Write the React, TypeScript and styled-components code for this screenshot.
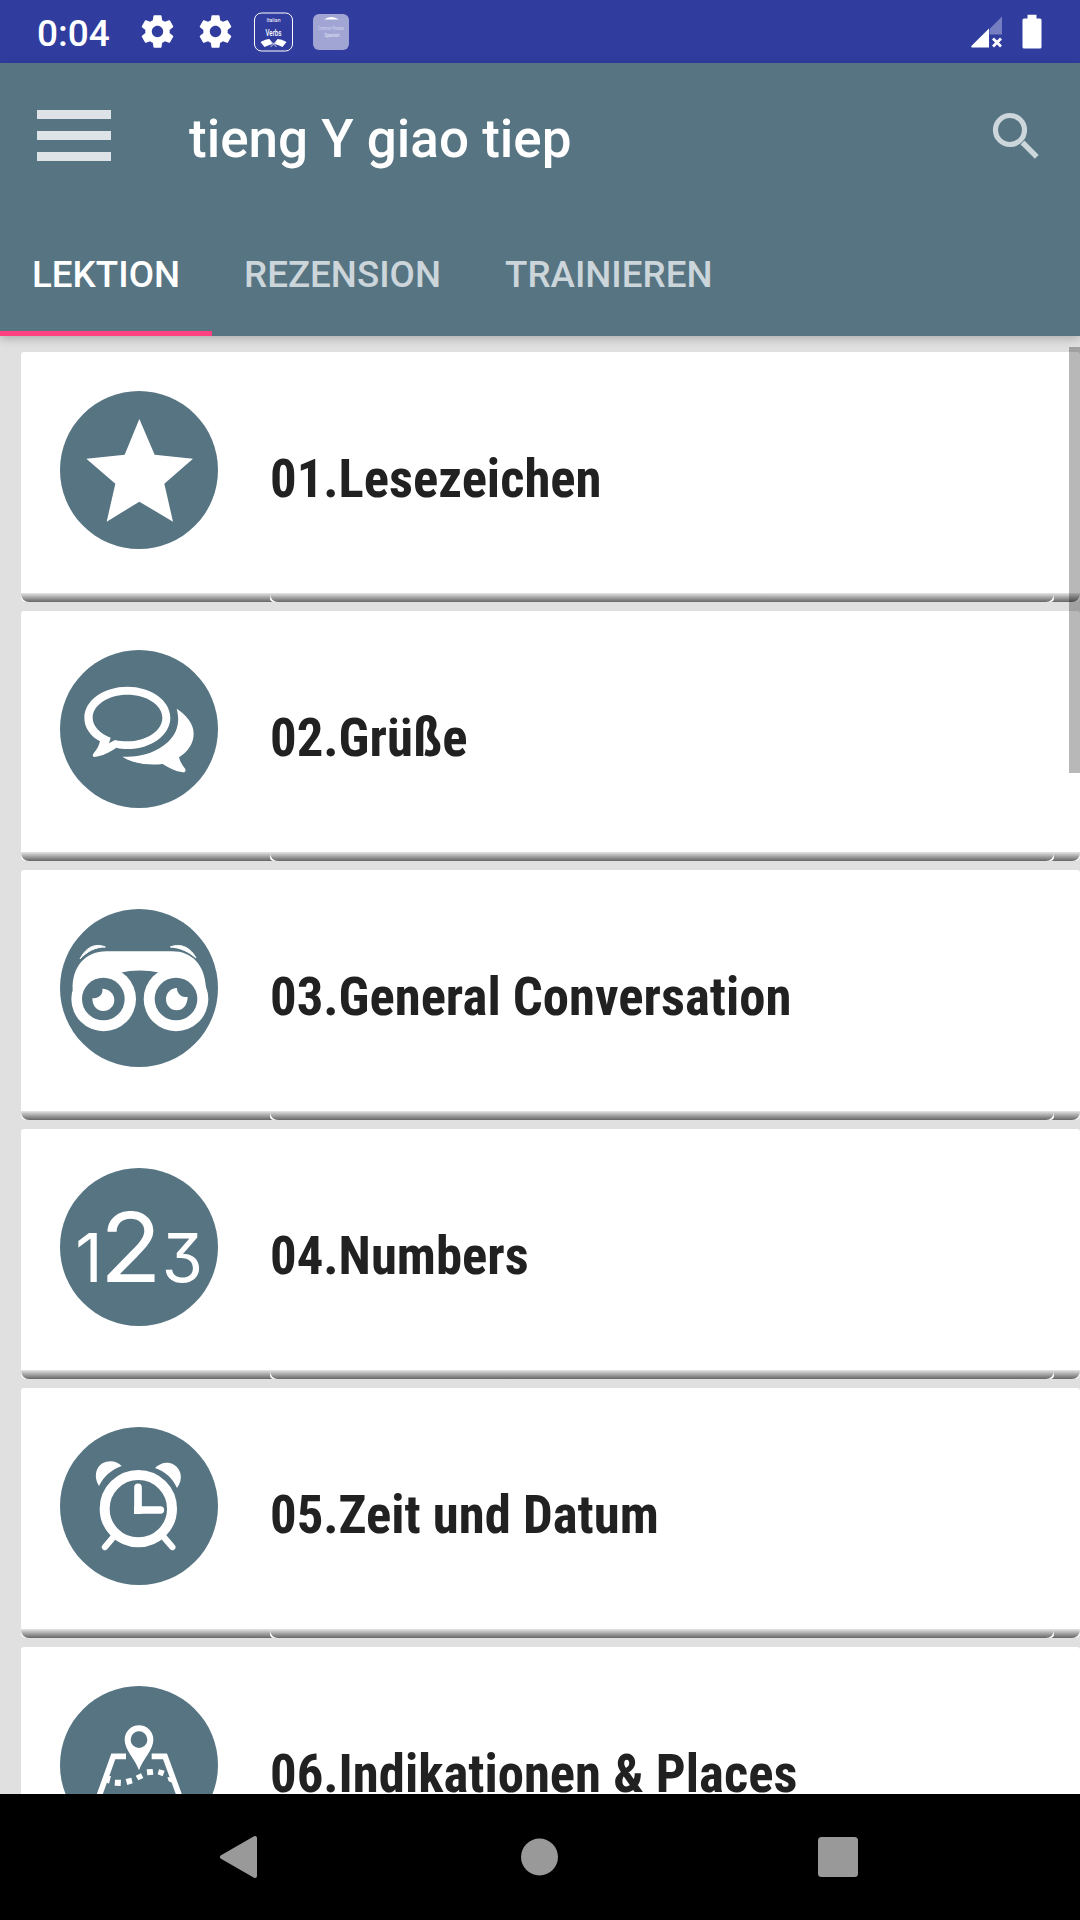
import React from "react";
import styled, { createGlobalStyle } from "styled-components";

const SLATE = "#567482";

const GlobalStyle = createGlobalStyle`
  html, body { margin: 0; padding: 0; background: #000; }
  *, *::before, *::after { box-sizing: border-box; }
  svg { display: block; flex: none; }
`;

const Screen = styled.div`
  display: flex;
  flex-direction: column;
  width: 1080px;
  height: 1920px;
  overflow: hidden;
  background: #e0e0e0;
  font-family: Roboto, "Liberation Sans", sans-serif;
`;

const StatusBar = styled.header`
  display: flex;
  align-items: center;
  flex: none;
  height: 63px;
  padding: 0 38px 0 37px;
  background: #303d9f;
  color: #fff;
`;

const Clock = styled.span`
  width: 100.5px;
  font-size: 37px;
  line-height: 63px;
  padding-top: 3px;
  font-weight: 500;
`;

const StatusIcons = styled.div`
  display: flex;
  align-items: center;
  gap: 19px;
`;

const NotificationIcon = styled.svg`
  overflow: visible;
`;

const SystemIcons = styled.div`
  display: flex;
  margin-left: auto;
  gap: 19px;
`;

const AppHeader = styled.div`
  position: relative;
  z-index: 1;
  flex: none;
  height: 273px;
  background: ${SLATE};
  box-shadow: 0 3px 9px rgba(0, 0, 0, 0.22);
`;

const Toolbar = styled.div`
  display: flex;
  align-items: center;
  height: 147px;
  padding: 0 32px 0 37px;
`;

const MenuButton = styled.div`
  display: flex;
  flex-direction: column;
  gap: 12px;
  width: 74px;
  margin: 0 78px 2px 0;
`;

const MenuLine = styled.span`
  height: 9px;
  background: #dde3e6;
`;

const Title = styled.h1`
  flex: 1;
  margin: 0;
  padding-top: 4px;
  color: #fff;
  font-size: 53px;
  font-weight: 500;
  line-height: 64px;
`;

const Tabs = styled.nav`
  display: flex;
  height: 126px;
`;

const Tab = styled.div<{ $active?: boolean }>`
  height: 126px;
  padding: 0 32px;
  color: ${(p) => (p.$active ? "#fff" : "#ccd5da")};
  border-bottom: 5px solid ${(p) => (p.$active ? "#ff4081" : "transparent")};
  font-size: 36.75px;
  font-weight: 500;
  line-height: 130px;
  white-space: nowrap;
`;

const ListArea = styled.main`
  position: relative;
  flex: 1;
  min-height: 0;
  overflow: hidden;
  padding: 16px 0 0 21px;
`;

const ScrollThumb = styled.div`
  position: absolute;
  top: 11px;
  right: 0;
  width: 11px;
  height: 426px;
  background: rgba(0, 0, 0, 0.28);
`;

const Card = styled.article`
  display: flex;
  flex-direction: column;
  height: 250px;
  margin-bottom: 9px;
  background: #fff;
  border-radius: 3px 3px 5px 5px;
`;

const CardBody = styled.div`
  display: flex;
  flex: 1;
  padding: 39px 0 0 39px;
`;

const Badge = styled.svg`
  width: 158px;
  height: 158px;
  border-radius: 50%;
  background: ${SLATE};
`;

const Label = styled.span`
  display: block;
  height: 64px;
  margin: 56px 0 0 52px;
  color: #212121;
  font-size: 52.72px;
  font-weight: 700;
  font-stretch: 75%;
  line-height: 64px;
  white-space: nowrap;
`;

const Edge = styled.div`
  flex: none;
  height: 9px;
  background: linear-gradient(#e6e6e6, #aaa 45%, #666);
  border-radius: 0 0 8px 8px;
`;

const EdgeInset = styled.div`
  height: 9px;
  margin: 0 26px 0 249px;
  background: #fff;
  border-radius: 0 0 4px 4px;
`;

const NavBar = styled.footer`
  display: flex;
  align-items: center;
  flex: none;
  height: 126px;
  padding: 0 222px 0 219px;
  justify-content: space-between;
  background: #000;
`;

const GEAR =
  "M19.43 12.98c.04-.32.07-.64.07-.98s-.03-.66-.07-.98l2.11-1.65c.19-.15.24-.42.12-.64l-2-3.46c-.12-.22-.39-.3-.61-.22l-2.49 1c-.52-.4-1.08-.73-1.69-.98l-.38-2.65C14.46 2.18 14.25 2 14 2h-4c-.25 0-.46.18-.49.42l-.38 2.65c-.61.25-1.17.59-1.69.98l-2.49-1c-.23-.09-.49 0-.61.22l-2 3.46c-.13.22-.07.49.12.64l2.11 1.65c-.04.32-.07.65-.07.98s.03.66.07.98l-2.11 1.65c-.19.15-.24.42-.12.64l2 3.46c.12.22.39.3.61.22l2.49-1c.52.4 1.08.73 1.69.98l.38 2.65c.03.24.24.42.49.42h4c.25 0 .46-.18.49-.42l.38-2.65c.61-.25 1.17-.59 1.69-.98l2.49 1c.23.09.49 0 .61-.22l2-3.46c.12-.22.07-.49-.12-.64l-2.11-1.65zM12 15.5c-1.93 0-3.5-1.57-3.5-3.5s1.57-3.5 3.5-3.5 3.5 1.57 3.5 3.5-1.57 3.5-3.5 3.5z";

const Gear = () => (
  <svg width="39" height="39" viewBox="0 0 24 24" fill="#fff">
    <path d={GEAR} />
  </svg>
);

const StarArt = () => (
  <path d="M298 147 344 254 459 266 373 341 399 455 298 395 200 455 226 341 139 266 254 254Z" fill="#fff" />
);

const ChatArt = () => (
  <g fill="#fff">
    <path
      fillRule="evenodd"
      d="M262 170C333 170 391 211 391 263S333 357 262 357C251 357 240 356 229 353C209 367 187 378 163 381C157 380 157 374 161 370C170 360 177 347 180 334C151 318 133 293 133 263C133 211 191 170 262 170ZM262 194C205 194 158 225 158 263C158 288 179 310 212 323L207 340L225 330C237 333 249 334 262 334C319 334 367 302 367 263S319 194 262 194Z"
    />
    <path d="M410 236C440 256 461 281 461 311C461 339 445 364 417 382C420 395 427 406 436 417C438 423 435 428 429 427C406 424 386 414 368 402C322 407 278 400 247 380C303 383 350 367 384 336C414 307 420 274 410 236Z" />
  </g>
);

const BinocularsArt = () => (
  <g>
    <path d="M120 207C136 175 163 157 196 171C166 171 141 184 120 207ZM391 171C424 157 454 176 468 204C445 184 420 173 391 171Z" fill="#fff" stroke="#fff" strokeWidth="3" />
    <path d="M98 300C95 230 137 184 199 184H397C454 184 495 223 498 295L440 300 360 248Q298 235 240 248L190 300Z" fill="#fff" />
    <circle cx="191" cy="327" r="97" fill="#fff" />
    <circle cx="408" cy="327" r="97" fill="#fff" />
    <circle cx="190" cy="327" r="64" fill={SLATE} />
    <circle cx="408" cy="327" r="64" fill={SLATE} />
    <path d="M187 296C208 297 223 311 223 330C223 349 208 363 190 363C171 363 157 349 157 325C176 325 190 314 187 296Z" fill="#fff" />
    <path d="M411 294C391 295 378 309 378 328C378 347 392 361 410 361C429 361 442 346 443 321C425 323 411 312 411 294Z" fill="#fff" />
  </g>
);

const Digits = styled.g`
  font-family: Inter, sans-serif;
  font-weight: 400;
  font-feature-settings: "cv09";
  text-anchor: middle;
`;

const NumbersArt = () => (
  <Digits fill="#fff">
    <text x="147" y="395" fontSize="202">1</text>
    <text x="272" y="395" fontSize="290" textLength="186" lengthAdjust="spacingAndGlyphs">2</text>
    <text x="427" y="397" fontSize="202" textLength="124" lengthAdjust="spacingAndGlyphs">3</text>
  </Digits>
);

const ClockArt = () => (
  <g fill="none" stroke="#fff">
    <circle cx="295" cy="296" r="101" strokeWidth="30" />
    <path d="M221 380 195 411M370 380 397 411" strokeWidth="19" strokeLinecap="round" />
    <path d="M294 232V300H361" strokeWidth="23" strokeLinecap="round" />
    <g fill="#fff" stroke="none">
      <path d="M282 290H305V312H282Z" />
      <path d="M177 228C161 202 166 174 187 160C206 149 231 152 245 168C215 178 190 201 177 228Z" />
      <path d="M345 174C360 158 383 153 402 164C425 178 430 208 411 234C399 207 376 184 345 174Z" />
    </g>
  </g>
);

const MapArt = () => (
  <g>
    <path d="M258 349H220L176 472M335 349H375L420 472" fill="none" stroke="#fff" strokeWidth="17" />
    <path
      fillRule="evenodd"
      fill="#fff"
      d="M297 391C287 359 254 330 254 299A43 43 0 0 1 340 299C340 330 307 359 297 391ZM297 274A25 25 0 1 0 297 324A25 25 0 1 0 297 274Z"
    />
    <g fill="#fff">
      <path d="M196 409 213 408 207 431 194 424ZM225 419 243 419 242 438 224 437ZM257 417 274 413 278 430 262 435ZM287 407 303 400 310 414 295 421ZM320 388 338 387 340 404 322 406ZM357 388 374 392 368 409 353 403ZM382 412 395 411 400 430 386 424Z" />
    </g>
  </g>
);

const lessons = [
  { label: "01.Lesezeichen", top: 63, art: <StarArt /> },
  { label: "02.Grüße", top: 60, art: <ChatArt /> },
  { label: "03.General Conversation", top: 57, art: <BinocularsArt /> },
  { label: "04.Numbers", top: 54, art: <NumbersArt /> },
  { label: "05.Zeit und Datum", top: 51, art: <ClockArt /> },
  { label: "06.Indikationen & Places", top: 138, art: <MapArt /> },
];

export default function App() {
  return (
    <Screen>
      <GlobalStyle />
      <StatusBar>
        <Clock>0:04</Clock>
        <StatusIcons>
          <Gear />
          <Gear />
          <NotificationIcon width="39" height="40" viewBox="0 0 39 40">
            <rect x=".5" y="1" width="38" height="38" rx="7" fill="none" stroke="#fff" strokeWidth="1" />
            <text x="19.5" y="9.5" fill="#fff" fontSize="5" textAnchor="middle" textLength="14" lengthAdjust="spacingAndGlyphs">Italian</text>
            <text x="19.5" y="24" fill="#fff" fontSize="8.5" fontWeight="500" textAnchor="middle" textLength="16" lengthAdjust="spacingAndGlyphs">Verbs</text>
            <path d="M6.5 30Q12 27 15.5 27L18.500 32Q15 33 10.500 35ZM32.500 30Q27.500 27 23.500 27L20.500 32Q24.500 33 28.500 35Z" fill="#fff" />
            <path d="M15.500 28 22.500 35M23.500 28 16.500 35" stroke="#fff" strokeWidth=".8" />
          </NotificationIcon>
          <NotificationIcon width="38" height="38" viewBox="0 0 38 38">
            <rect x="1" y="1" width="36" height="36" rx="6" fill="#a0a5d3" />
            <path d="M12 6.5Q19 1.5 27 6.5Z" fill="#fff" />
            <text x="19" y="16.5" fill="#d4d7ee" fontSize="4.5" textAnchor="middle" textLength="26" lengthAdjust="spacingAndGlyphs">Common Phrases</text>
            <text x="20" y="23.5" fill="#e4e6f5" fontSize="5" textAnchor="middle" textLength="15" lengthAdjust="spacingAndGlyphs">Spanish</text>
          </NotificationIcon>
        </StatusIcons>
        <SystemIcons>
          <svg width="32" height="36" viewBox="0 0 32 36">
            <path d="M31 2.5V20.5H18.5V15Z" fill="#757ec0" />
            <path d="M18 14.5V33.5H1Q-.3 33 .6 31.8Z" fill="#fff" />
            <path d="M22 24.5 30 32.5M30 24.5 22 32.5" stroke="#fff" strokeWidth="2.8" />
          </svg>
          <svg width="20" height="36" viewBox="0 0 20 36">
            <path d="M5.5 .7H14.5V4.5H18Q19.5 4.5 19.5 6V33Q19.5 34.5 18 34.5H2Q.5 34.5 .5 33V6Q.5 4.5 2 4.5H5.5Z" fill="#fff" />
          </svg>
        </SystemIcons>
      </StatusBar>

      <AppHeader>
        <Toolbar>
          <MenuButton>
            <MenuLine />
            <MenuLine />
            <MenuLine />
          </MenuButton>
          <Title>tieng Y giao tiep</Title>
          <svg width="63" height="63" viewBox="0 0 63 63" fill="none" stroke="#ccd6db">
            <circle cx="25" cy="25" r="14.5" strokeWidth="5.2" />
            <path d="M37.5 37.5 51.8 51.8" strokeWidth="5.4" />
          </svg>
        </Toolbar>
        <Tabs>
          <Tab $active>LEKTION</Tab>
          <Tab>REZENSION</Tab>
          <Tab>TRAINIEREN</Tab>
        </Tabs>
      </AppHeader>

      <ListArea>
        {lessons.map((lesson) => (
          <Card key={lesson.label}>
            <CardBody>
              <Badge viewBox={`60 ${lesson.top} 474 474`}>{lesson.art}</Badge>
              <Label>{lesson.label}</Label>
            </CardBody>
            <Edge>
              <EdgeInset>
                <Edge />
              </EdgeInset>
            </Edge>
          </Card>
        ))}
        <ScrollThumb />
      </ListArea>

      <NavBar>
        <svg width="40" height="44" viewBox="0 0 40 44">
          <path d="M3 22 36 3V41Z" fill="#999" stroke="#999" strokeWidth="4" strokeLinejoin="round" />
        </svg>
        <svg width="38" height="38" viewBox="0 0 38 38">
          <circle cx="19.5" cy="19" r="18.5" fill="#999" />
        </svg>
        <svg width="40" height="40" viewBox="0 0 40 40">
          <rect width="40" height="40" rx="3.5" fill="#999" />
        </svg>
      </NavBar>
    </Screen>
  );
}
